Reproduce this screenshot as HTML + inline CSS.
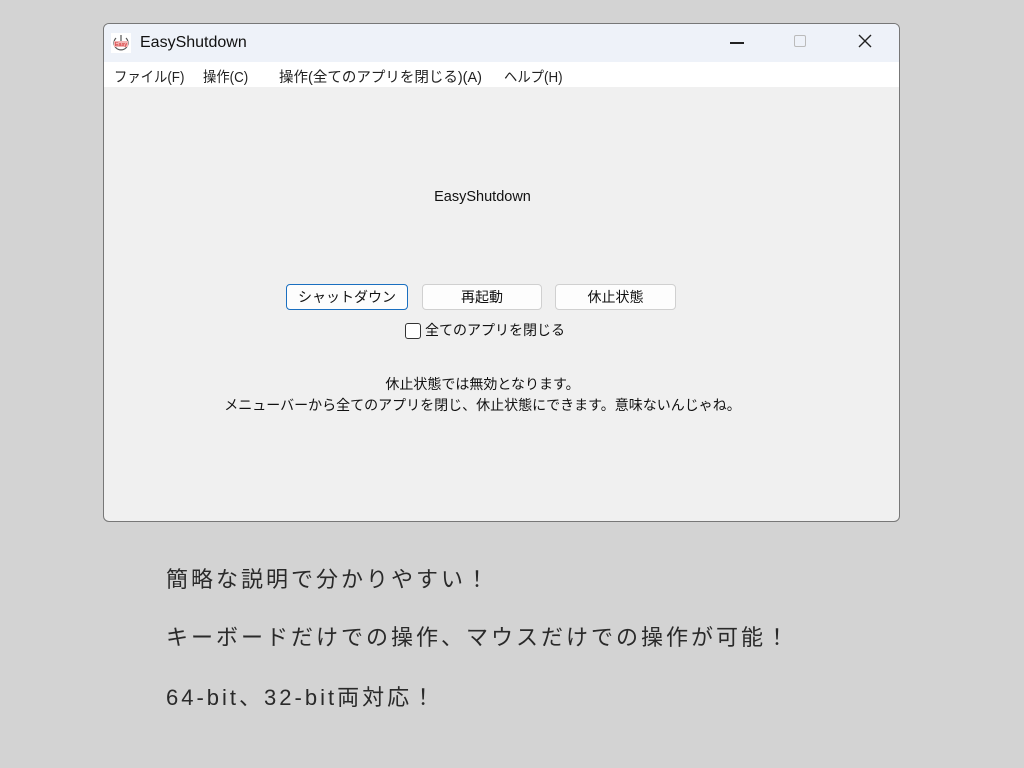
<!DOCTYPE html>
<html><head><meta charset="utf-8"><style>
*{margin:0;padding:0;box-sizing:border-box}
body{width:1024px;height:768px;background:#d3d3d3;position:relative;overflow:hidden;font-family:"Liberation Sans","Noto Sans CJK JP",sans-serif;color:#111}
.win{position:absolute;left:103px;top:23px;width:797px;height:499px;background:#f0f0f0;border:1px solid #777;border-radius:6px 6px 6px 6px;overflow:hidden}
.title{position:absolute;left:0;top:0;width:100%;height:38px;background:#eef2f9}
.title .t{position:absolute;left:36px;top:10px;font-size:16px;color:#111}
.menu{position:absolute;left:0;top:38px;width:100%;height:25px;background:#fff;font-size:14.5px;color:#222}
.menu span{position:absolute;top:4px;transform:scaleX(.92);transform-origin:left}
.abs{position:absolute}
.btn{position:absolute;top:260px;height:26px;background:#fdfdfd;border:1px solid #d0d0d0;border-radius:4px;font-size:14px;text-align:center;line-height:24px}
.txt{position:absolute;left:-19px;width:100%;text-align:center;font-size:14px}
.cap{position:absolute;left:166px;font-size:22px;color:#2a2a2a;letter-spacing:3px}
</style></head><body>
<div class="win">
 <div class="title">
  <svg class="abs" style="left:7px;top:9px" width="20" height="20" viewBox="0 0 20 20"><rect width="20" height="20" fill="#fff"/><path d="M5 5 A7 7 0 1 0 15 5" fill="none" stroke="#555" stroke-width="1.2"/><line x1="10" y1="2" x2="10" y2="8" stroke="#555" stroke-width="1.2"/><rect x="3" y="8" width="14" height="6" fill="#f3b5b5"/><text x="10" y="13" font-size="5.5" fill="#d02020" text-anchor="middle" font-family="Liberation Sans">Easy</text></svg>
  <div class="t">EasyShutdown</div>
  <div class="abs" style="left:626px;top:18px;width:14px;height:1.5px;background:#222"></div>
  <div class="abs" style="left:690px;top:11px;width:12px;height:12px;border:1px solid #bbb;border-radius:2px"></div>
  <svg class="abs" style="left:754px;top:10px" width="14" height="14"><path d="M1 1L13 13M13 1L1 13" stroke="#222" stroke-width="1.4"/></svg>
 </div>
 <div class="menu">
  <span style="left:10px">ファイル(F)</span>
  <span style="left:99px">操作(C)</span>
  <span style="left:175px;transform:scaleX(1)">操作(全てのアプリを閉じる)(A)</span>
  <span style="left:400px">ヘルプ(H)</span>
 </div>
 <div class="txt" style="top:165px;font-size:14.5px">EasyShutdown</div>
 <div class="btn" style="left:182px;width:122px;border:1px solid #1a6fc0">シャットダウン</div>
 <div class="btn" style="left:318px;width:120px">再起動</div>
 <div class="btn" style="left:451px;width:121px">休止状態</div>
 <div class="abs" style="left:301px;top:299px;width:16px;height:16px;border:1px solid #333;border-radius:3px;background:#fff"></div>
 <div class="abs" style="left:321px;top:296px;font-size:14px">全てのアプリを閉じる</div>
 <div class="txt" style="top:350px">休止状態では無効となります。</div>
 <div class="txt" style="top:371px">メニューバーから全てのアプリを閉じ、休止状態にできます。意味ないんじゃね。</div>
</div>
<div class="cap" style="top:562px">簡略な説明で分かりやすい！</div>
<div class="cap" style="top:620px">キーボードだけでの操作、マウスだけでの操作が可能！</div>
<div class="cap" style="top:680px">64-bit、32-bit両対応！</div>
</body></html>
